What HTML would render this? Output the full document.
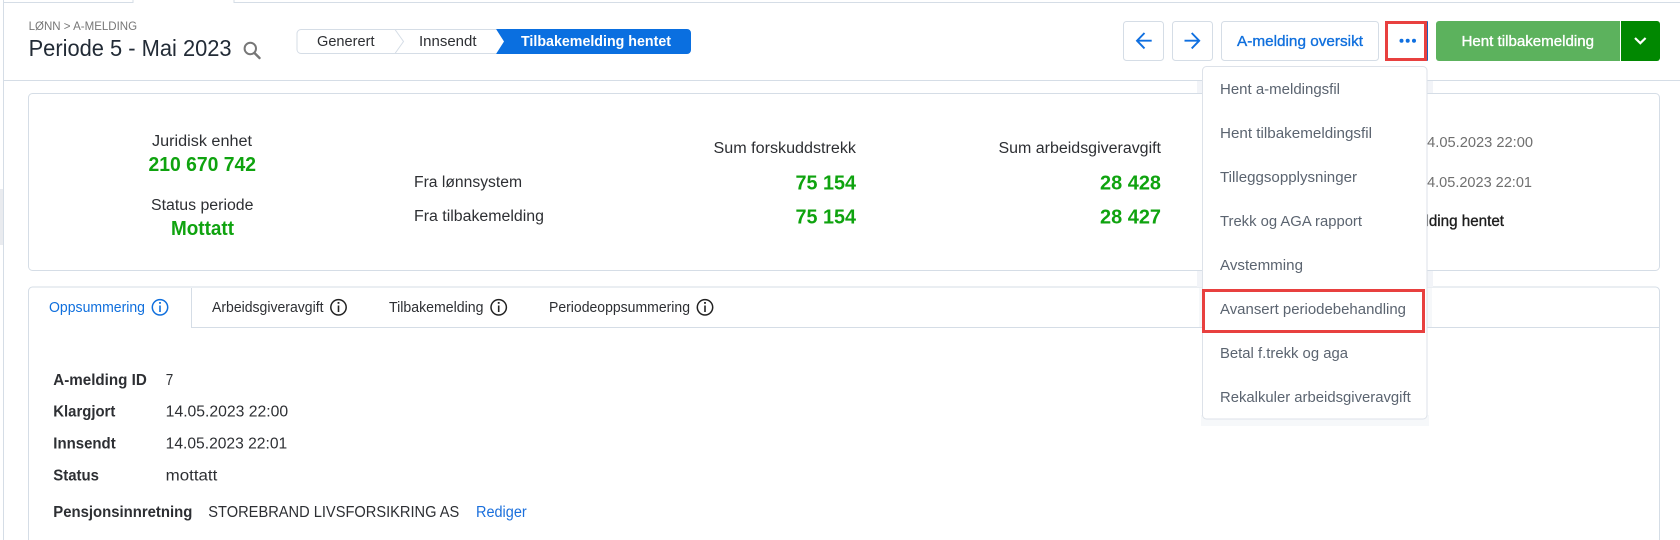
<!DOCTYPE html>
<html lang="no"><head><meta charset="utf-8"><title>A-melding</title>
<style>
html,body{margin:0;padding:0;background:#fff;width:1680px;height:540px;overflow:hidden}
svg{display:block}
text{font-family:"Liberation Sans",sans-serif;font-size:15.4px;fill:#2d2f33}
.m{stroke-width:.35px;paint-order:stroke}
.b{font-weight:bold}
.g{font-weight:bold;font-size:20.5px;fill:#0fa30f}
.menu{font-size:15px;fill:#5b6470}
.blue{fill:#0f6fdd}
.tab{font-size:14.6px}
</style></head><body>
<svg width="1680" height="540" viewBox="0 0 1680 540" xmlns="http://www.w3.org/2000/svg">
<rect width="1680" height="540" fill="#fff"/>
<rect x="0" y="189" width="3" height="56" fill="#e9ebef"/>
<!-- frame lines -->
<path d="M4 2.5H133V0M234 0V2.5H1680" fill="none" stroke="#d5dde6"/>
<path d="M3.5 0V540" stroke="#d5dde6"/>
<path d="M4 80.5H1680" stroke="#d5dde6"/>
<!-- header -->
<text x="28.6" y="30" style="font-size:12.4px;fill:#777" textLength="108.5" lengthAdjust="spacingAndGlyphs">LØNN &gt; A-MELDING</text>
<text x="28.6" y="56" style="font-size:23px;fill:#222b36" textLength="203" lengthAdjust="spacingAndGlyphs">Periode 5 - Mai 2023</text>
<circle cx="250.3" cy="48.5" r="5.7" fill="none" stroke="#777" stroke-width="2"/>
<path d="M254.5 53L259.5 58" stroke="#777" stroke-width="2.4" stroke-linecap="round"/>
<!-- stepper -->
<path d="M496 29.5H301a4 4 0 0 0-4 4V49.5a4 4 0 0 0 4 4H496" fill="#fff" stroke="#d5dde6"/>
<path d="M395 29.5L403.5 41.5L395 53.5" fill="none" stroke="#d5dde6"/>
<path d="M496 29H687a4 4 0 0 1 4 4V50a4 4 0 0 1-4 4H496L504 41.5Z" fill="#0a6fe0"/>
<text x="317" y="46" style="font-size:15px" textLength="57.5" lengthAdjust="spacingAndGlyphs">Generert</text>
<text x="419" y="46" style="font-size:15px" textLength="57.5" lengthAdjust="spacingAndGlyphs">Innsendt</text>
<text x="521" y="46" class="b" style="font-size:15px;fill:#fff" textLength="150" lengthAdjust="spacingAndGlyphs">Tilbakemelding hentet</text>
<!-- buttons -->
<rect x="1123.5" y="21.5" width="40" height="39" rx="3" fill="#fff" stroke="#d5dde6"/>
<path d="M1151.7 40.7H1137.5M1144.5 33L1137 40.7L1144.5 48.4" fill="none" stroke="#0f6fe0" stroke-width="1.9"/>
<rect x="1172.5" y="21.5" width="40" height="39" rx="3" fill="#fff" stroke="#d5dde6"/>
<path d="M1184.5 40.7H1198.7M1191.7 33L1199.2 40.7L1191.7 48.4" fill="none" stroke="#0f6fe0" stroke-width="1.9"/>
<rect x="1221.5" y="21.5" width="157" height="39" rx="3" fill="#fff" stroke="#d5dde6"/>
<text x="1237" y="46" class="blue m" stroke="#0f6fdd" style="font-size:15px" textLength="126" lengthAdjust="spacingAndGlyphs">A-melding oversikt</text>
<rect x="1425" y="21" width="3" height="40" rx="1" fill="#1b62c0"/>
<rect x="1386.5" y="22.5" width="39" height="37" fill="#fff" stroke="#e8403f" stroke-width="3"/>
<circle cx="1401.5" cy="40.7" r="2" fill="#0f6fe0"/><circle cx="1407.7" cy="40.7" r="2" fill="#0f6fe0"/><circle cx="1414" cy="40.7" r="2" fill="#0f6fe0"/>
<path d="M1439 21H1620V61H1439a3 3 0 0 1-3-3V24a3 3 0 0 1 3-3Z" fill="#5cb25d"/>
<path d="M1621 21H1657a3 3 0 0 1 3 3V58a3 3 0 0 1-3 3H1621Z" fill="#018801"/>
<text x="1461.5" y="46" class="m" stroke="#fff" style="font-size:15px;fill:#fff" textLength="132.5" lengthAdjust="spacingAndGlyphs">Hent tilbakemelding</text>
<path d="M1635 38L1640.3 43.2L1645.6 38" fill="none" stroke="#fff" stroke-width="2.2"/>
<!-- card 1 -->
<rect x="28.5" y="93.5" width="1631" height="177" rx="4" fill="#fff" stroke="#d5dde6"/>
<text x="152" y="146" textLength="100" lengthAdjust="spacingAndGlyphs">Juridisk enhet</text>
<text x="148.5" y="171" class="g" textLength="107.5" lengthAdjust="spacingAndGlyphs">210 670 742</text>
<text x="151" y="210" textLength="102.5" lengthAdjust="spacingAndGlyphs">Status periode</text>
<text x="171" y="235" class="g" textLength="63" lengthAdjust="spacingAndGlyphs">Mottatt</text>
<text x="713.5" y="153" textLength="142.5" lengthAdjust="spacingAndGlyphs">Sum forskuddstrekk</text>
<text x="998.5" y="153" textLength="162.5" lengthAdjust="spacingAndGlyphs">Sum arbeidsgiveravgift</text>
<text x="414" y="187" textLength="108" lengthAdjust="spacingAndGlyphs">Fra lønnsystem</text>
<text x="414" y="221" textLength="130" lengthAdjust="spacingAndGlyphs">Fra tilbakemelding</text>
<text x="795.5" y="189.3" class="g" textLength="60.5" lengthAdjust="spacingAndGlyphs">75 154</text>
<text x="1100" y="189.3" class="g" textLength="61" lengthAdjust="spacingAndGlyphs">28 428</text>
<text x="795.5" y="223.3" class="g" textLength="60.5" lengthAdjust="spacingAndGlyphs">75 154</text>
<text x="1100" y="223.3" class="g" textLength="61" lengthAdjust="spacingAndGlyphs">28 427</text>
<text x="1419" y="147" style="font-size:14.4px;fill:#6f6f6f" textLength="114" lengthAdjust="spacingAndGlyphs">14.05.2023 22:00</text>
<text x="1419" y="187" style="font-size:14.4px;fill:#6f6f6f" textLength="113" lengthAdjust="spacingAndGlyphs">14.05.2023 22:01</text>
<text x="1356" y="226" class="m" stroke="#1c1c1c" style="fill:#1c1c1c" textLength="148" lengthAdjust="spacingAndGlyphs">Tilbakemelding hentet</text>
<!-- card 2 -->
<path d="M28.5 540V291a4 4 0 0 1 4-4H1655.5a4 4 0 0 1 4 4V540" fill="#fff" stroke="#d5dde6"/>
<path d="M191.5 288V327.5H1659" fill="none" stroke="#d5dde6"/>
<text x="49" y="312" class="tab blue" style="fill:#0f6fdd" textLength="96" lengthAdjust="spacingAndGlyphs">Oppsummering</text>
<g fill="none" stroke="#0f6fdd" stroke-width="1.5"><circle cx="160" cy="307.3" r="7.7"/><path d="M160 305.5V312" stroke-width="1.6"/><path d="M160 302V303.8" stroke-width="1.8"/></g>
<text x="212" y="312" class="tab" textLength="111.5" lengthAdjust="spacingAndGlyphs">Arbeidsgiveravgift</text>
<g fill="none" stroke="#222" stroke-width="1.5"><circle cx="338.5" cy="307.3" r="7.7"/><path d="M338.5 305.5V312" stroke-width="1.6"/><path d="M338.5 302V303.8" stroke-width="1.8"/></g>
<text x="389" y="312" class="tab" textLength="94.5" lengthAdjust="spacingAndGlyphs">Tilbakemelding</text>
<g fill="none" stroke="#222" stroke-width="1.5"><circle cx="498.7" cy="307.3" r="7.7"/><path d="M498.7 305.5V312" stroke-width="1.6"/><path d="M498.7 302V303.8" stroke-width="1.8"/></g>
<text x="549" y="312" class="tab" textLength="141" lengthAdjust="spacingAndGlyphs">Periodeoppsummering</text>
<g fill="none" stroke="#222" stroke-width="1.5"><circle cx="705" cy="307.3" r="7.7"/><path d="M705 305.5V312" stroke-width="1.6"/><path d="M705 302V303.8" stroke-width="1.8"/></g>
<!-- details -->
<text x="53.3" y="385" class="b" textLength="93.5" lengthAdjust="spacingAndGlyphs">A-melding ID</text>
<text x="165.7" y="385" textLength="7.5" lengthAdjust="spacingAndGlyphs">7</text>
<text x="53.3" y="416.7" class="b" textLength="62" lengthAdjust="spacingAndGlyphs">Klargjort</text>
<text x="165.7" y="416.7" textLength="122.5" lengthAdjust="spacingAndGlyphs">14.05.2023 22:00</text>
<text x="53.3" y="448.7" class="b" textLength="62.4" lengthAdjust="spacingAndGlyphs">Innsendt</text>
<text x="165.7" y="448.7" textLength="121.5" lengthAdjust="spacingAndGlyphs">14.05.2023 22:01</text>
<text x="53.3" y="480.7" class="b" textLength="45.7" lengthAdjust="spacingAndGlyphs">Status</text>
<text x="165.7" y="480.7" textLength="51.6" lengthAdjust="spacingAndGlyphs">mottatt</text>
<text x="53.3" y="517" class="b" textLength="139" lengthAdjust="spacingAndGlyphs">Pensjonsinnretning</text>
<text x="208.3" y="517" textLength="251" lengthAdjust="spacingAndGlyphs">STOREBRAND LIVSFORSIKRING AS</text>
<text x="476" y="517" class="blue" style="fill:#1a6fdc" textLength="50.7" lengthAdjust="spacingAndGlyphs">Rediger</text>
<!-- dropdown -->
<path d="M1197 81H1433V93H1197ZM1197 271H1433V287H1197Z" fill="#f2f4f8"/>
<path d="M1199 288H1432V327H1199ZM1201 415H1429V426H1201Z" fill="#f6f8fa"/>
<rect x="1202.5" y="66.5" width="224.5" height="352.5" rx="4" fill="#fff" stroke="#dde2e9"/>
<text x="1220" y="94" class="menu" textLength="120" lengthAdjust="spacingAndGlyphs">Hent a-meldingsfil</text>
<text x="1220" y="138" class="menu" textLength="152" lengthAdjust="spacingAndGlyphs">Hent tilbakemeldingsfil</text>
<text x="1220" y="182" class="menu" textLength="137" lengthAdjust="spacingAndGlyphs">Tilleggsopplysninger</text>
<text x="1220" y="226" class="menu" textLength="142" lengthAdjust="spacingAndGlyphs">Trekk og AGA rapport</text>
<text x="1220" y="270" class="menu" textLength="83" lengthAdjust="spacingAndGlyphs">Avstemming</text>
<text x="1220" y="314" class="menu" textLength="186" lengthAdjust="spacingAndGlyphs">Avansert periodebehandling</text>
<text x="1220" y="358" class="menu" textLength="128" lengthAdjust="spacingAndGlyphs">Betal f.trekk og aga</text>
<text x="1220" y="402" class="menu" textLength="190.7" lengthAdjust="spacingAndGlyphs">Rekalkuler arbeidsgiveravgift</text>
<rect x="1203.5" y="290.5" width="220" height="41" fill="none" stroke="#e8403f" stroke-width="3"/>
</svg>
</body></html>
